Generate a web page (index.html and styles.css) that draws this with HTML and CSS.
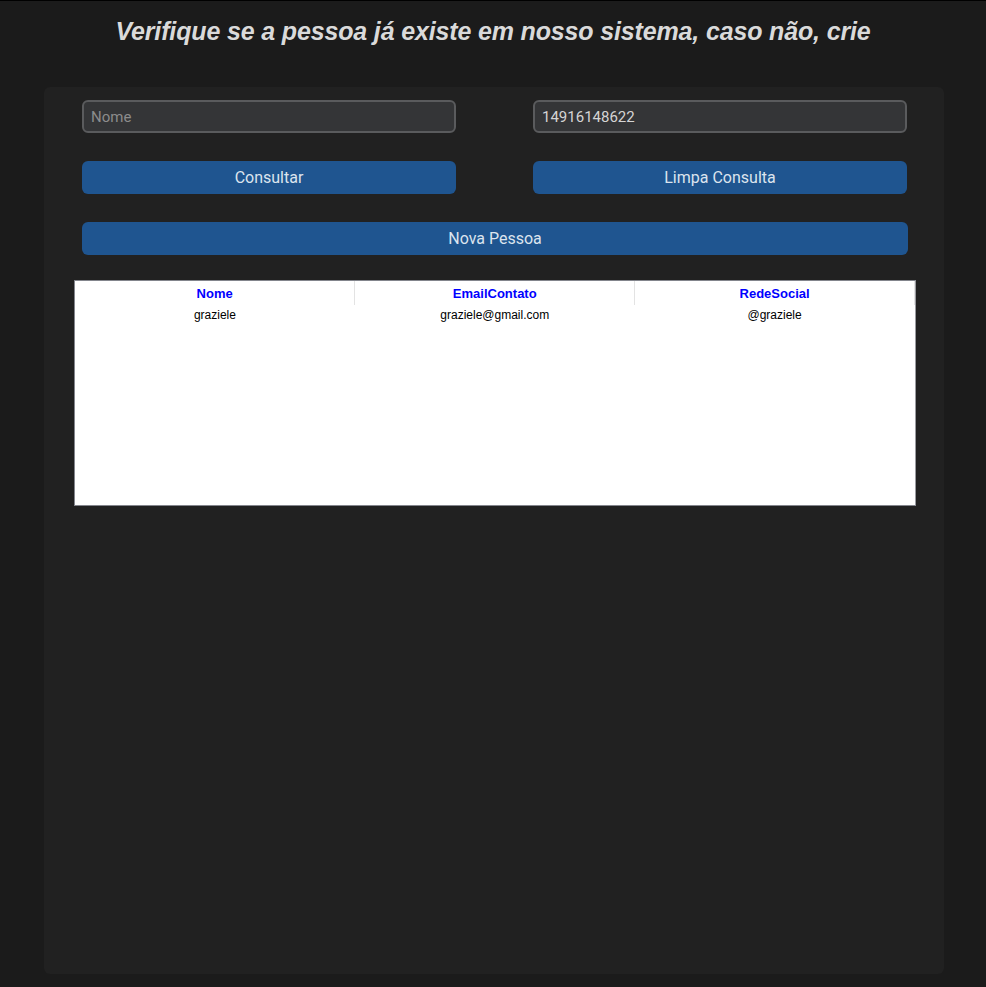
FILE: index.html
```html
<!DOCTYPE html>
<html lang="pt-BR">
<head>
<meta charset="utf-8">
<title>Pessoas</title>
<link rel="stylesheet" href="styles.css">
</head>
<body>
  <header class="top">
    <h1 class="title">Verifique se a pessoa já existe em nosso sistema, caso não, crie</h1>
  </header>
  <main class="panel">
    <div class="form-grid">
      <input class="field" type="text" placeholder="Nome">
      <input class="field" type="text" value="14916148622">
      <button class="btn" type="button">Consultar</button>
      <button class="btn" type="button">Limpa Consulta</button>
      <button class="btn btn-wide" type="button">Nova Pessoa</button>
    </div>
    <div class="grid-wrap">
      <table class="grid">
        <thead>
          <tr><th>Nome</th><th>EmailContato</th><th>RedeSocial</th></tr>
        </thead>
        <tbody>
          <tr><td>graziele</td><td>graziele@gmail.com</td><td>@graziele</td></tr>
        </tbody>
      </table>
    </div>
  </main>
</body>
</html>
```

FILE: styles.css
```css
* { box-sizing: border-box; }
html, body { height: 100%; }
body {
  margin: 0;
  background: #1b1b1b;
  border-top: 1px solid #000;
  display: flex;
  flex-direction: column;
  min-height: 100vh;
  font-family: Roboto, "Liberation Sans", sans-serif;
}
.top {
  height: 86px;
  padding-top: 16px;
}
.title {
  margin: 0;
  text-align: center;
  font-family: "Liberation Sans", Arial, sans-serif;
  font-style: italic;
  font-weight: bold;
  font-size: 25px;
  letter-spacing: -0.15px;
  line-height: 28px;
  color: #dadada;
}
.panel {
  flex: 1;
  margin: 0 42px 13px 44px;
  background: #212121;
  border-radius: 6px;
  padding: 13px 28px 0 30px;
}
.form-grid {
  display: grid;
  grid-template-columns: 374px 374px;
  column-gap: 77px;
  row-gap: 28px;
  padding: 0 0 0 8px;
}
.field {
  height: 33px;
  background: #343537;
  border: 2px solid #5a5b5d;
  border-radius: 6px;
  padding: 0 7px;
  font-family: Roboto, sans-serif;
  font-size: 15px;
  color: #d4d4d4;
  outline: none;
}
.field::placeholder { color: #8c8c8c; }
.btn {
  height: 33px;
  background: #1f5590;
  border: none;
  border-radius: 6px;
  color: #dce4ee;
  font-family: Roboto, sans-serif;
  font-size: 16px;
  cursor: pointer;
}
.btn-wide {
  grid-column: 1 / 3;
  width: 826px;
}
.grid-wrap {
  margin-top: 25px;
  height: 226px;
  background: #fff;
  border: 1px solid #83858c;
  border-right-color: #9a9ba0;
}
.grid {
  width: 840px;
  border-collapse: collapse;
  table-layout: fixed;
}
.grid th {
  height: 24px;
  padding: 0;
  font-family: "Liberation Sans", Arial, sans-serif;
  font-weight: bold;
  font-size: 13px;
  color: #0000ff;
  border-right: 1px solid #e3e3e3;
  text-align: center;
}
.grid td {
  height: 20px;
  padding: 0;
  font-family: "Liberation Sans", Arial, sans-serif;
  font-size: 12px;
  color: #000;
  text-align: center;
  vertical-align: top;
  padding-top: 3px;
}
```
